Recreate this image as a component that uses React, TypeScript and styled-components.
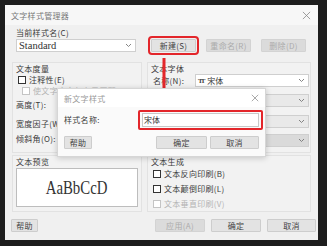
import React from 'react';
import styled, { createGlobalStyle } from 'styled-components';

const GlobalStyle = createGlobalStyle`
  html, body {
    margin: 0;
    padding: 0;
    background: #1d1d1d;
  }
  * {
    box-sizing: border-box;
  }
`;

const cjk = `"Noto Sans CJK SC", "Noto Sans", sans-serif`;

const Chevron = () => (
  <svg width="7" height="5" viewBox="0 0 7 5">
    <polyline points="1,1 3.5,3.5 6,1" fill="none" stroke="#777" strokeWidth="0.9" />
  </svg>
);

const CloseIcon = ({ size = 9 }: { size?: number }) => (
  <svg width={size} height={size} viewBox="0 0 10 10">
    <path d="M1 1 L9 9 M9 1 L1 9" stroke="#888" strokeWidth="0.9" />
  </svg>
);

const App = () => {
  return (
    <Screen>
      <GlobalStyle />
      <Dialog>
        <TitleBar>
          <TitleText>文字样式管理器</TitleText>
          <CloseIcon />
        </TitleBar>

        <TopRow>
          <StyleField>
            <Label>当前样式名(C)</Label>
            <Select $width={120}>
              <SerifText>Standard</SerifText>
              <Chevron />
            </Select>
          </StyleField>
          <ButtonRow>
            <Button $width={45} $highlight>新建(S)</Button>
            <Button $width={45} disabled>重命名(R)</Button>
            <Button $width={45} disabled>删除(D)</Button>
          </ButtonRow>
        </TopRow>

        <PanelGrid>
          <Panel>
            <PanelTitle>文本度量</PanelTitle>
            <CheckRow $indent={6} $height={11}>
              <CheckBox />
              <Label>注释性(E)</Label>
            </CheckRow>
            <CheckRow $indent={10} $height={12}>
              <CheckBox $disabled />
              <Label $disabled>使文字方向与布局匹配(M)</Label>
            </CheckRow>
            <FieldRow $top={1}>
              <FieldLabel>高度(T):</FieldLabel>
              <TextInput />
            </FieldRow>
            <FieldRow $top={5}>
              <FieldLabel>宽度因子(W):</FieldLabel>
              <TextInput />
            </FieldRow>
            <FieldRow $top={1}>
              <FieldLabel>倾斜角(O):</FieldLabel>
              <TextInput />
            </FieldRow>
          </Panel>

          <Panel>
            <PanelTitle>文本字体</PanelTitle>
            <SelectRow $top={0}>
              <FieldLabel $width={42}>名称(N):</FieldLabel>
              <Select $width={114}>
                <FontName>
                  <TTIcon>TT</TTIcon>
                  宋体
                </FontName>
                <Chevron />
              </Select>
            </SelectRow>
            <SelectRow $top={7}>
              <Spacer />
              <Select $width={114} $tone="#e9e9e9">
                <span />
                <Chevron />
              </Select>
            </SelectRow>
            <SelectRow $top={8}>
              <Spacer />
              <Select $width={114} $tone="#e9e9e9">
                <span />
                <Chevron />
              </Select>
            </SelectRow>
            <SelectRow $top={6}>
              <Spacer />
              <Select $width={114} $tone="#dadada">
                <span />
                <Chevron />
              </Select>
            </SelectRow>
          </Panel>

          <Panel>
            <PanelTitle>文本预览</PanelTitle>
            <Preview>
              <PreviewText>AaBbCcD</PreviewText>
            </Preview>
          </Panel>

          <Panel>
            <PanelTitle>文本生成</PanelTitle>
            <CheckRow $indent={6} $height={15}>
              <CheckBox />
              <Label>文本反向印刷(B)</Label>
            </CheckRow>
            <CheckRow $indent={6} $height={15}>
              <CheckBox />
              <Label>文本颠倒印刷(L)</Label>
            </CheckRow>
            <CheckRow $indent={6} $height={15}>
              <CheckBox $disabled />
              <Label $disabled>文本垂直印刷(V)</Label>
            </CheckRow>
          </Panel>
        </PanelGrid>

        <BottomRow>
          <Button $width={27}>帮助</Button>
          <BottomActions>
            <Button $width={50} disabled>应用(A)</Button>
            <Button $width={50}>确定</Button>
            <Button $width={49}>取消</Button>
          </BottomActions>
        </BottomRow>

        <Arrow width="12" height="48" viewBox="0 0 12 48">
          <rect x="4.5" y="0" width="3" height="39" fill="#e3262b" />
          <polygon points="0.5,38 11.5,38 6,47" fill="#e3262b" />
        </Arrow>

        <Modal>
          <ModalTitleBar>
            <ModalTitle>新文字样式</ModalTitle>
            <CloseIcon size={8} />
          </ModalTitleBar>
          <ModalBody>
            <ModalField>
              <Label>样式名称:</Label>
              <RedFrame>
                <NameInput>宋体</NameInput>
              </RedFrame>
            </ModalField>
            <ModalButtons>
              <Button $width={28}>帮助</Button>
              <ModalActions>
                <Button $width={51}>确定</Button>
                <Button $width={49}>取消</Button>
              </ModalActions>
            </ModalButtons>
          </ModalBody>
        </Modal>
      </Dialog>
    </Screen>
  );
};

const Screen = styled.div`
  width: 327px;
  height: 246px;
  padding: 5px 0 0 5px;
  background: #1d1d1d;
  font-family: ${cjk};
`;

const Dialog = styled.div`
  position: relative;
  width: 313px;
  height: 235px;
  background: #f0f0f0;
  display: flex;
  flex-direction: column;
`;

const TitleBar = styled.div`
  height: 20px;
  display: flex;
  align-items: center;
  justify-content: space-between;
  padding: 0 7px 0 6px;
  background: #f7f7f7;
`;

const TitleText = styled.span`
  font-size: 8px;
  color: #777;
  letter-spacing: 0.3px;
`;

const TopRow = styled.div`
  display: flex;
  align-items: flex-end;
  padding: 3px 0 0 11px;
`;

const StyleField = styled.div`
  display: flex;
  flex-direction: column;
  gap: 1px;
`;

const Label = styled.span<{ $disabled?: boolean }>`
  font-size: 8px;
  line-height: 10px;
  color: ${(p) => (p.$disabled ? '#b4b4b4' : '#3a3a3a')};
  letter-spacing: 0.3px;
  white-space: nowrap;
`;

const Select = styled.div<{ $width: number; $tone?: string }>`
  width: ${(p) => p.$width}px;
  height: 13px;
  background: ${(p) => p.$tone || '#fff'};
  border: 1px solid #cfcfcf;
  display: flex;
  align-items: center;
  justify-content: space-between;
  padding: 0 3px 0 2px;
  flex-shrink: 0;
`;

const SerifText = styled.span`
  font-family: "Liberation Serif", serif;
  font-size: 10.5px;
  color: #333;
`;

const ButtonRow = styled.div`
  display: flex;
  gap: 10px;
  margin-left: 15px;
`;

const Button = styled.button<{ $width: number; $highlight?: boolean }>`
  width: ${(p) => p.$width}px;
  height: 13px;
  padding: 0;
  margin: 0;
  font-family: ${cjk};
  font-size: 8px;
  line-height: 11px;
  letter-spacing: 0.3px;
  color: #444;
  background: #e3e3e3;
  border: 1px solid #cdcdcd;
  border-radius: 1px;
  white-space: nowrap;
  outline: ${(p) => (p.$highlight ? '2px solid #e3262b' : 'none')};
  outline-offset: 1px;
  &:disabled {
    color: #ababab;
    background: #dbdbdb;
    border-color: #d3d3d3;
  }
`;

const PanelGrid = styled.div`
  display: grid;
  grid-template-columns: 130px 164px;
  grid-template-rows: 91px 57px;
  column-gap: 5px;
  row-gap: 2px;
  margin: 10px 0 0 7px;
`;

const Panel = styled.div`
  display: flex;
  flex-direction: column;
  border: 1px solid #e2e2e2;
  background: #f2f2f2;
  padding: 0 3px;
`;

const PanelTitle = styled.div`
  font-size: 8px;
  height: 11px;
  line-height: 11px;
  color: #3a3a3a;
  letter-spacing: 0.3px;
`;

const CheckRow = styled.div<{ $indent: number; $height: number }>`
  display: flex;
  align-items: center;
  gap: 3px;
  height: ${(p) => p.$height}px;
  padding-left: ${(p) => p.$indent - 4}px;
`;

const CheckBox = styled.span<{ $disabled?: boolean }>`
  width: 8px;
  height: 8px;
  flex-shrink: 0;
  background: #fff;
  border: 1px solid ${(p) => (p.$disabled ? '#c4c4c4' : '#333')};
`;

const FieldRow = styled.div<{ $top: number }>`
  display: flex;
  align-items: center;
  height: 14px;
  margin-top: ${(p) => p.$top}px;
`;

const FieldLabel = styled(Label)<{ $width?: number }>`
  width: ${(p) => p.$width || 62}px;
  flex-shrink: 0;
`;

const Spacer = styled.span`
  width: 42px;
  flex-shrink: 0;
`;

const TextInput = styled.div`
  width: 56px;
  height: 13px;
  background: #fff;
  border: 1px solid #cfcfcf;
`;

const SelectRow = styled.div<{ $top: number }>`
  display: flex;
  align-items: center;
  margin-top: ${(p) => p.$top}px;
  padding-left: 2px;
`;

const FontName = styled.span`
  display: flex;
  align-items: center;
  gap: 2px;
  font-size: 8px;
  color: #333;
`;

const TTIcon = styled.span`
  font-family: "Liberation Serif", serif;
  font-weight: bold;
  font-size: 7px;
  letter-spacing: -2px;
  color: #444;
  margin-right: 2px;
`;

const Preview = styled.div`
  margin: 1px 0 0 0;
  width: 122px;
  height: 39px;
  background: #fff;
  border: 1px solid #bdbdbd;
  display: flex;
  align-items: center;
  justify-content: center;
`;

const PreviewText = styled.span`
  display: inline-block;
  font-family: "Liberation Serif", serif;
  font-size: 19px;
  color: #333;
  transform: scaleX(0.78);
`;

const BottomRow = styled.div`
  display: flex;
  align-items: center;
  padding: 7px 2px 0 6px;
`;

const BottomActions = styled.div`
  margin-left: auto;
  display: flex;
  gap: 6px;
`;

const Arrow = styled.svg`
  position: absolute;
  left: 153px;
  top: 53px;
`;

const Modal = styled.div`
  position: absolute;
  left: 52px;
  top: 83px;
  width: 209px;
  height: 69px;
  background: #fafafa;
  border: 1px solid #d6d6d6;
  box-shadow: 0 1px 6px rgba(0, 0, 0, 0.2);
  display: flex;
  flex-direction: column;
`;

const ModalTitleBar = styled.div`
  height: 18px;
  display: flex;
  align-items: center;
  justify-content: space-between;
  padding: 0 6px 0 6px;
  background: #fff;
`;

const ModalTitle = styled.span`
  font-size: 8px;
  color: #999;
  letter-spacing: 0.3px;
`;

const ModalBody = styled.div`
  display: flex;
  flex-direction: column;
  padding: 3px 2px 0 6px;
`;

const ModalField = styled.div`
  display: flex;
  align-items: center;
  justify-content: space-between;
`;

const RedFrame = styled.div`
  width: 125px;
  padding: 1px 2px;
  border: 2px solid #e3262b;
  border-radius: 2px;
`;

const NameInput = styled.div`
  height: 14px;
  background: #fff;
  border: 1px solid #c8c8c8;
  font-size: 8px;
  line-height: 12px;
  padding-left: 1px;
  color: #333;
`;

const ModalButtons = styled.div`
  display: flex;
  align-items: center;
  margin-top: 6px;
`;

const ModalActions = styled.div`
  margin-left: auto;
  display: flex;
  gap: 3px;
  margin-right: 4px;
`;

export default App;
